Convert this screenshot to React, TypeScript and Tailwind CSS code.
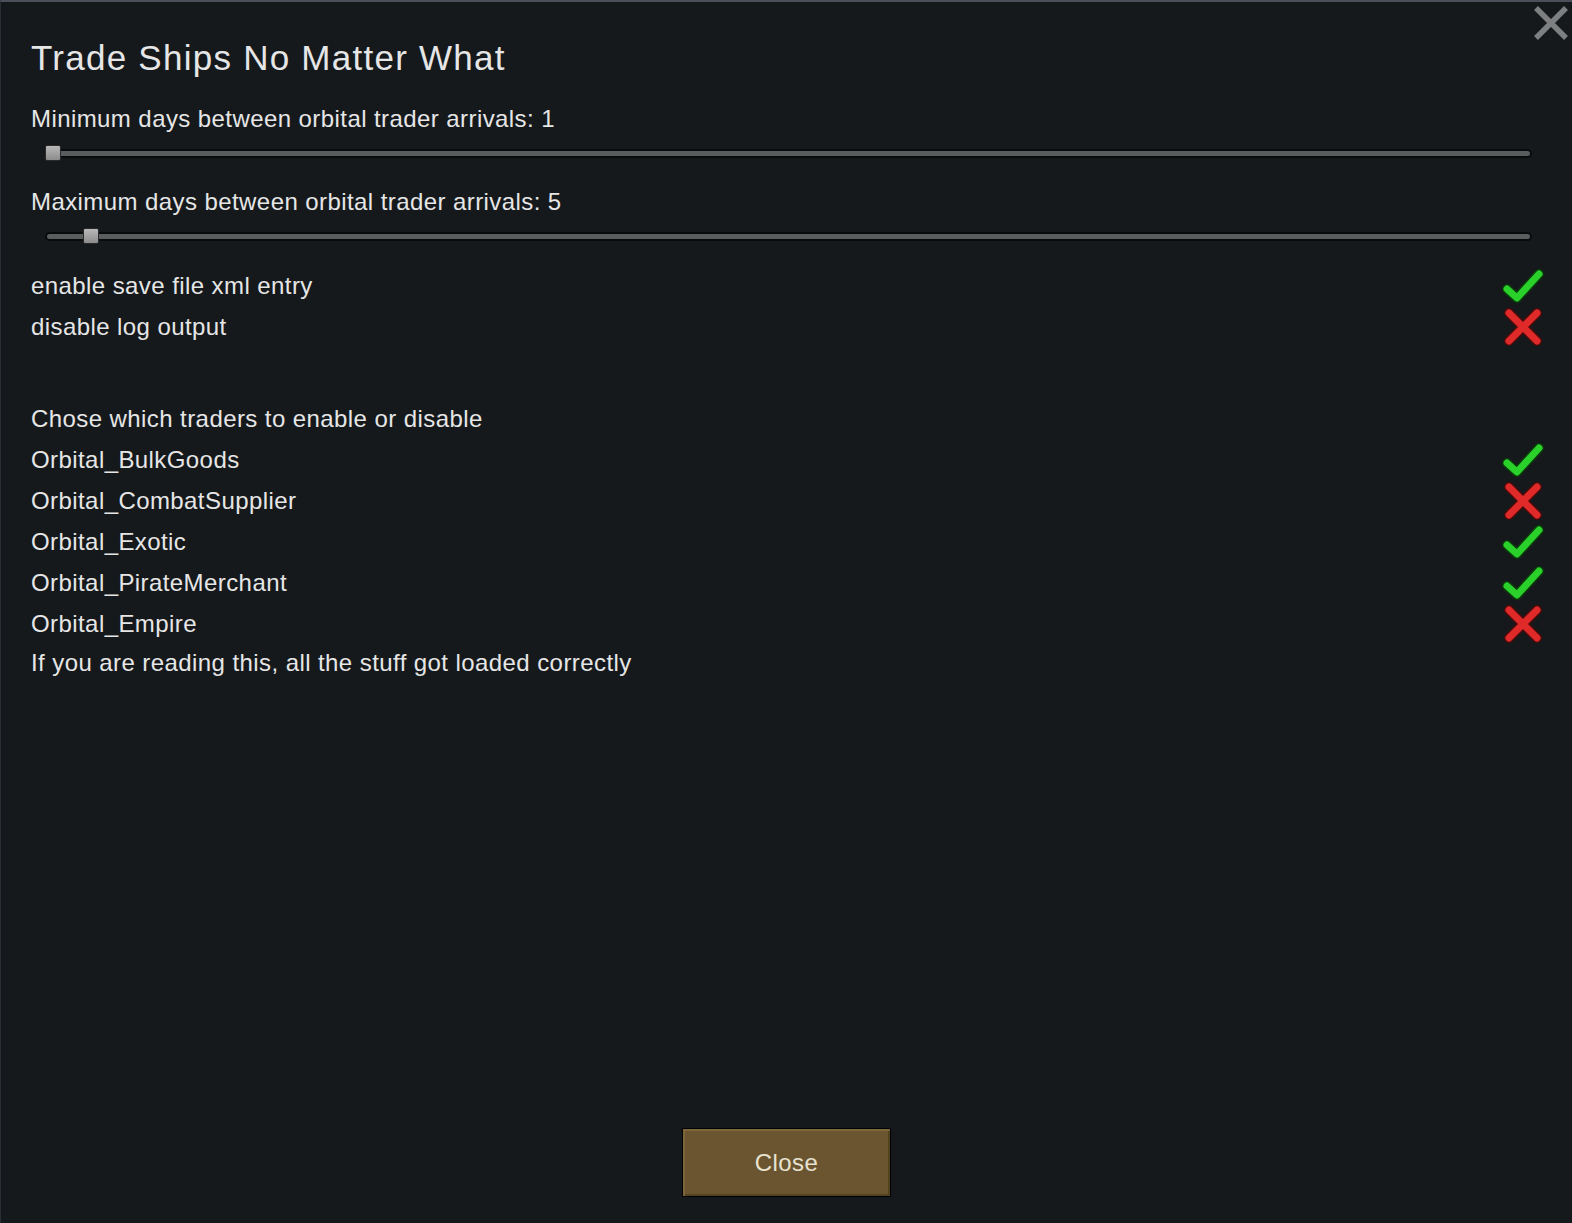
const font = { fontFamily: '"Liberation Sans", Arial, sans-serif' };

function Check() {
  return (
    <svg width="42" height="36" viewBox="0 0 42 36">
      <path d="M5 21 L15 30 L37 6" fill="none" stroke="#0b3a0b" strokeWidth="10" strokeLinecap="round" strokeLinejoin="round" />
      <path d="M5 21 L15 30 L37 6" fill="none" stroke="#2bd12b" strokeWidth="7" strokeLinecap="round" strokeLinejoin="round" />
    </svg>
  );
}

function Cross() {
  return (
    <svg width="42" height="38" viewBox="0 0 42 38">
      <path d="M7 5 L35 33 M35 5 L7 33" fill="none" stroke="#4a0b0b" strokeWidth="10" strokeLinecap="round" />
      <path d="M7 5 L35 33 M35 5 L7 33" fill="none" stroke="#e02a2a" strokeWidth="7" strokeLinecap="round" />
    </svg>
  );
}

function Slider({ knob }: { knob: number }) {
  return (
    <div className="relative h-6 ml-[14px] mr-[10px] flex items-center">
      <div className="h-[9px] w-full rounded-full bg-[#5a5d5e] border-2 border-[#0a0b0c]" />
      <div
        className="absolute top-[4px] h-[16px] w-[16px] rounded-[2px] border border-[#2a2a2a] bg-gradient-to-b from-[#b8b8b8] to-[#8c8c8c]"
        style={{ left: knob }}
      />
    </div>
  );
}

const traders: [string, boolean][] = [
  ['Orbital_BulkGoods', true],
  ['Orbital_CombatSupplier', false],
  ['Orbital_Exotic', true],
  ['Orbital_PirateMerchant', true],
  ['Orbital_Empire', false],
];

function Row({ label, on }: { label: string; on?: boolean }) {
  return (
    <div className="flex h-[41px] items-center justify-between">
      <span>{label}</span>
      {on !== undefined && (
        <div className="mr-[-2px] flex w-[42px] justify-center">{on ? <Check /> : <Cross />}</div>
      )}
    </div>
  );
}

export default function App() {
  return (
    <div
      className="relative flex h-[1223px] w-full flex-col border-t-2 border-l border-t-[#4a4f5a] border-l-[#2a2e34] bg-[#15191c] text-[#e6e6e6]"
      style={font}
    >
      <button className="absolute right-[3px] top-[4px] text-[#7d7f80]">
        <svg width="36" height="34" viewBox="0 0 36 34">
          <path d="M3 2 L33 32 M33 2 L3 32" stroke="currentColor" strokeWidth="5.5" />
        </svg>
      </button>

      <div className="px-[30px] pr-[30px]">
        <h1 className="mt-[36px] text-[35px] leading-[40px] tracking-[1.25px]">Trade Ships No Matter What</h1>

        <div className="tracking-[0.42px] text-[24px]">
          <div className="mt-[27px] leading-[28px]">Minimum days between orbital trader arrivals: 1</div>
          <div className="mt-[8px]">
            <Slider knob={0} />
          </div>

          <div className="mt-[23px] leading-[28px]">Maximum days between orbital trader arrivals: 5</div>
          <div className="mt-[8px]">
            <Slider knob={38} />
          </div>

          <div className="mt-[17px]">
            <Row label="enable save file xml entry" on />
            <Row label="disable log output" on={false} />
            <div className="h-[51px]" />
            <Row label="Chose which traders to enable or disable" />
            {traders.map(([t, on]) => (
              <Row key={t} label={t} on={on} />
            ))}
            <div className="flex h-[38px] items-center">If you are reading this, all the stuff got loaded correctly</div>
          </div>
        </div>
      </div>

      <div className="flex-1" />

      <div className="mb-[26px] flex justify-center">
        <button className="h-[69px] w-[209px] border border-black bg-[#6a5530] p-0 shadow-[inset_2px_2px_0_#7d6638,inset_-2px_-2px_0_#54431f] text-[24px] tracking-[0.4px] text-[#e8e2d0]">
          Close
        </button>
      </div>
    </div>
  );
}
